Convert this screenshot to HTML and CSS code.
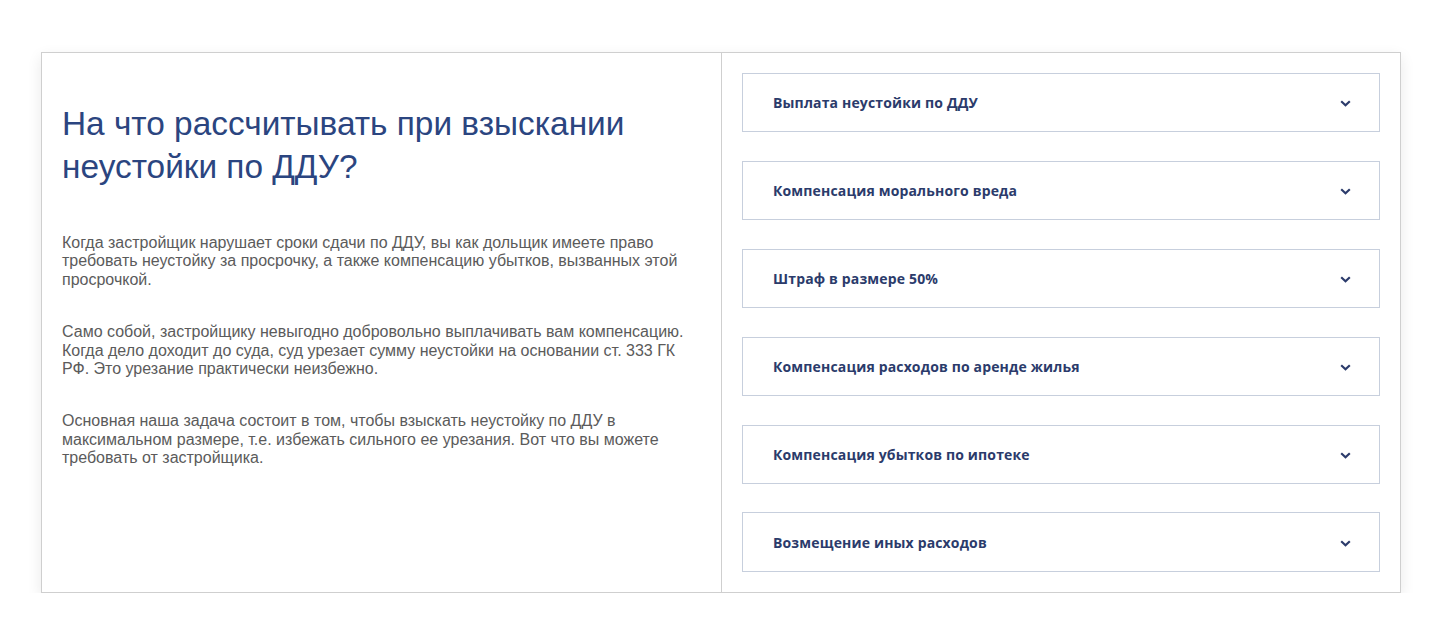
FILE: index.html
```html
<!DOCTYPE html>
<html lang="ru">
<head>
<meta charset="utf-8">
<title>Неустойка по ДДУ</title>
<link rel="stylesheet" href="styles.css">
</head>
<body>
<section class="card">
  <div class="intro">
    <h2 class="intro-title">На что рассчитывать при взыскании неустойки по ДДУ?</h2>
    <p class="intro-text">Когда застройщик нарушает сроки сдачи по ДДУ, вы как дольщик имеете право требовать неустойку за просрочку, а также компенсацию убытков, вызванных этой просрочкой.</p>
    <p class="intro-text">Само собой, застройщику невыгодно добровольно выплачивать вам компенсацию. Когда дело доходит до суда, суд урезает сумму неустойки на основании ст. 333 ГК РФ. Это урезание практически неизбежно.</p>
    <p class="intro-text">Основная наша задача состоит в том, чтобы взыскать неустойку по ДДУ в максимальном размере, т.е. избежать сильного ее урезания. Вот что вы можете требовать от застройщика.</p>
  </div>
  <div class="accordion">
    <div class="acc-item"><span class="acc-title">Выплата неустойки по ДДУ</span><svg class="chev" viewBox="0 0 11 7" width="11" height="7"><path d="M1.2 1.2 L5.5 5.2 L9.8 1.2" fill="none" stroke="#2b3b6b" stroke-width="2.2"/></svg></div>
    <div class="acc-item"><span class="acc-title">Компенсация морального вреда</span><svg class="chev" viewBox="0 0 11 7" width="11" height="7"><path d="M1.2 1.2 L5.5 5.2 L9.8 1.2" fill="none" stroke="#2b3b6b" stroke-width="2.2"/></svg></div>
    <div class="acc-item"><span class="acc-title">Штраф в размере 50%</span><svg class="chev" viewBox="0 0 11 7" width="11" height="7"><path d="M1.2 1.2 L5.5 5.2 L9.8 1.2" fill="none" stroke="#2b3b6b" stroke-width="2.2"/></svg></div>
    <div class="acc-item"><span class="acc-title">Компенсация расходов по аренде жилья</span><svg class="chev" viewBox="0 0 11 7" width="11" height="7"><path d="M1.2 1.2 L5.5 5.2 L9.8 1.2" fill="none" stroke="#2b3b6b" stroke-width="2.2"/></svg></div>
    <div class="acc-item"><span class="acc-title">Компенсация убытков по ипотеке</span><svg class="chev" viewBox="0 0 11 7" width="11" height="7"><path d="M1.2 1.2 L5.5 5.2 L9.8 1.2" fill="none" stroke="#2b3b6b" stroke-width="2.2"/></svg></div>
    <div class="acc-item"><span class="acc-title">Возмещение иных расходов</span><svg class="chev" viewBox="0 0 11 7" width="11" height="7"><path d="M1.2 1.2 L5.5 5.2 L9.8 1.2" fill="none" stroke="#2b3b6b" stroke-width="2.2"/></svg></div>
  </div>
</section>
</body>
</html>
```

FILE: styles.css
```css
* { box-sizing: border-box; }
html, body { margin: 0; padding: 0; background: #fff; }
body { font-family: "Liberation Sans", Arial, sans-serif; }

.card {
  width: 1360px;
  margin: 52px 0 0 41px;
  border: 1px solid #cfcfcf;
  box-shadow: 0 5px 14px rgba(0, 0, 0, 0.09);
  display: grid;
  grid-template-columns: 680px 1fr;
  background: #fff;
}

.intro {
  padding: 20px 19px 20px 20px;
  border-right: 1px solid #cfcfcf;
}

.intro-title {
  margin: 30px 0 46px;
  font-family: "Liberation Sans", Arial, sans-serif;
  font-weight: 400;
  font-size: 33.4px;
  line-height: 42.5px;
  color: #2b4580;
}

.intro-text {
  margin: 0 0 34px;
  font-size: 16px;
  line-height: 18.4px;
  color: #5b5b5b;
}

.accordion {
  padding: 20px;
  display: flex;
  flex-direction: column;
  gap: 28.5px;
}

.acc-item {
  height: 59.4px;
  border: 1px solid #c7cfdd;
  display: flex;
  align-items: center;
  justify-content: space-between;
  padding: 0 28px 0 30px;
}

.acc-title {
  font-family: "Open Sans", "Noto Sans", sans-serif;
  font-weight: 700;
  font-size: 14px;
  letter-spacing: 0.15px;
  color: #2b3b6b;
}

.chev { display: block; margin-top: 2px; }
```
